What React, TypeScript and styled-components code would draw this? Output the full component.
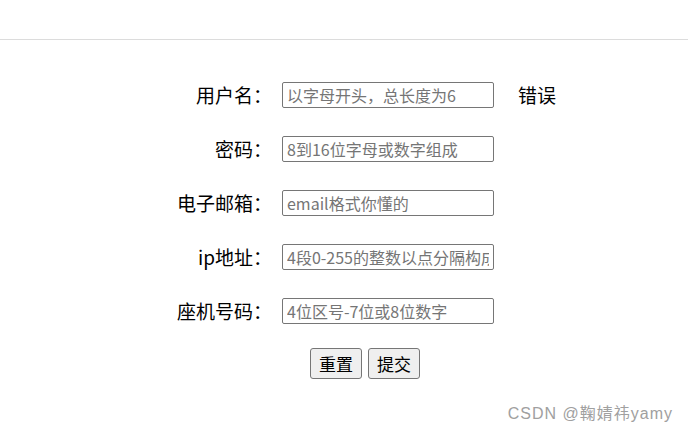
import React from 'react';
import styled, { createGlobalStyle } from 'styled-components';

const GlobalStyle = createGlobalStyle`
  html, body {
    margin: 0;
    padding: 0;
    background: #ffffff;
    font-family: "Noto Sans CJK SC", "Noto Sans", sans-serif;
  }
`;

const Page = styled.div`
  width: 688px;
  height: 434px;
  display: flex;
  flex-direction: column;
  position: relative;
  overflow: hidden;
`;

const TopBar = styled.div`
  height: 39px;
  border-bottom: 1px solid #dcdcdc;
  flex-shrink: 0;
`;

const Form = styled.form`
  display: grid;
  grid-template-columns: 110px 212px auto;
  column-gap: 10px;
  row-gap: 28px;
  align-items: center;
  margin: 42px 0 0 162px;
`;

const Label = styled.label`
  text-align: right;
  font-size: 19px;
  line-height: 26px;
  color: #000;
  white-space: nowrap;
`;

const Input = styled.input`
  box-sizing: border-box;
  width: 212px;
  height: 26px;
  margin: 0;
  padding: 0 4px;
  border: 1px solid #767676;
  border-radius: 2px;
  font-family: inherit;
  font-size: 16px;
  color: #000;
  outline: none;

  &::placeholder {
    color: #757575;
  }
`;

const ErrorText = styled.span<{ $show: boolean }>`
  padding-left: 14px;
  font-size: 19px;
  line-height: 26px;
  color: #000;
  visibility: ${p => (p.$show ? 'visible' : 'hidden')};
`;

const ButtonRow = styled.div`
  grid-column: 2;
  display: flex;
  gap: 6px;
  margin: -4px 0 0 28px;
`;

const Button = styled.button`
  box-sizing: border-box;
  width: 52px;
  height: 31px;
  padding: 0;
  border: 1px solid #767676;
  border-radius: 3px;
  background: #efefef;
  font-family: inherit;
  font-size: 17px;
  color: #000;
`;

const Watermark = styled.div`
  position: absolute;
  right: 15px;
  bottom: 10px;
  font-family: "Liberation Sans", "Noto Sans CJK SC", sans-serif;
  font-size: 16px;
  letter-spacing: 1px;
  color: #a0a0a0;
  text-shadow: 0 0 1px rgba(255, 255, 255, 0.8);
`;

const fields = [
  { label: '用户名：', placeholder: '以字母开头，总长度为6', error: true },
  { label: '密码：', placeholder: '8到16位字母或数字组成', error: false },
  { label: '电子邮箱：', placeholder: 'email格式你懂的', error: false },
  { label: 'ip地址：', placeholder: '4段0-255的整数以点分隔构成', error: false },
  { label: '座机号码：', placeholder: '4位区号-7位或8位数字', error: false },
];

export default function App() {
  return (
    <>
      <GlobalStyle />
      <Page>
        <TopBar />
        <Form onSubmit={e => e.preventDefault()}>
          {fields.map(f => (
            <React.Fragment key={f.label}>
              <Label>{f.label}</Label>
              <Input type="text" placeholder={f.placeholder} />
              <ErrorText $show={f.error}>错误</ErrorText>
            </React.Fragment>
          ))}
          <ButtonRow>
            <Button type="reset">重置</Button>
            <Button type="submit">提交</Button>
          </ButtonRow>
        </Form>
        <Watermark>CSDN @鞠婧祎yamy</Watermark>
      </Page>
    </>
  );
}
